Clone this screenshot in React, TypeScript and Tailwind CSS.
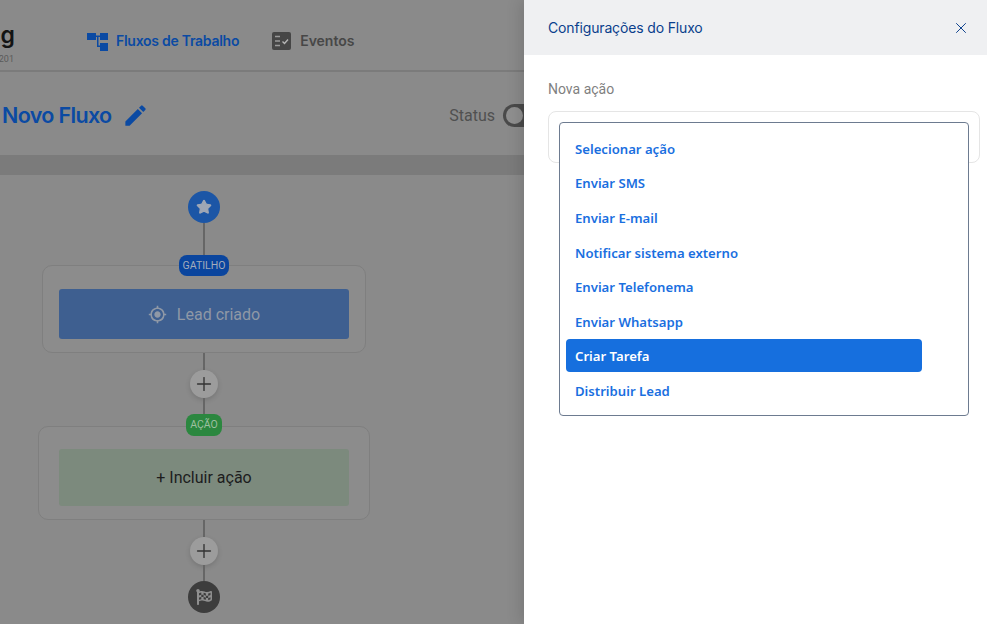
import React from 'react';
import { Star, X, Plus } from 'lucide-react';
import { MdEdit, MdGpsFixed } from 'react-icons/md';
import { FaFlagCheckered } from 'react-icons/fa';

const acoes = [
  'Selecionar ação',
  'Enviar SMS',
  'Enviar E-mail',
  'Notificar sistema externo',
  'Enviar Telefonema',
  'Enviar Whatsapp',
  'Criar Tarefa',
  'Distribuir Lead',
];

const WorkflowIcon = () => (
  <svg width="21" height="19" viewBox="0 0 21 19" fill="#0b4aa3">
    <rect x="0" y="1" width="9" height="7" />
    <rect x="13" y="1" width="8" height="7" />
    <rect x="13" y="11" width="8" height="8" />
    <rect x="9" y="3.5" width="4" height="1.5" />
    <rect x="10" y="4" width="1.5" height="11" />
    <rect x="10" y="13.5" width="3" height="1.5" />
  </svg>
);

const EventosIcon = () => (
  <svg width="19" height="18" viewBox="0 0 19 18">
    <rect width="19" height="18" rx="2" fill="#464646" />
    <path d="M3 4.5h5M3 9h5M3 13.5h5" stroke="#9a9a9a" strokeWidth="1.4" />
    <path d="M10.5 9.5l2 2 3.5-4" stroke="#b5b5b5" strokeWidth="1.4" fill="none" />
  </svg>
);

const Connector = ({ h }: { h: number }) => (
  <div className="w-[2px] bg-[#666666]" style={{ height: h }} />
);

const AddButton = () => (
  <div className="w-7 h-7 rounded-full bg-[#9c9c9c] shadow-[0_2px_5px_rgba(0,0,0,0.15)] flex items-center justify-center text-[#333333]">
    <Plus className="w-[22px] h-[22px]" strokeWidth={1.5} />
  </div>
);

const App: React.FC = () => {
  return (
    <div className="relative h-screen w-full overflow-hidden bg-[#8a8a8a] font-['Roboto',sans-serif]">
      {/* pagina atras do drawer */}
      <div className="w-[524px] h-full">
        <header className="h-[72px] border-b-2 border-[#7b7b7b] flex items-start">
          <div className="w-[87px] shrink-0 relative overflow-hidden h-full">
            <span className="absolute right-[72px] top-[24px] text-[23px] leading-none font-semibold text-[#141414] font-['Inter',sans-serif]">ng</span>
            <span className="absolute right-[73px] top-[55px] text-[9px] leading-none text-[#5a5a5a]">201</span>
          </div>
          <nav className="flex items-center gap-[33px] pt-[31px] font-['Inter',sans-serif] text-[14px] font-semibold leading-5 tracking-[-0.27px]">
            <a className="flex items-center gap-2 text-[#0b4aa3]">
              <WorkflowIcon />
              Fluxos de Trabalho
            </a>
            <a className="flex items-center gap-[9px] text-[#474747] tracking-[0px]">
              <EventosIcon />
              Eventos
            </a>
          </nav>
        </header>

        <div className="h-[83px] flex items-center pl-[2px] pt-[4px]">
          <h1 className="text-[21.5px] font-semibold text-[#0b4aa3] font-['Inter',sans-serif] tracking-[-0.65px]">Novo Fluxo</h1>
          <MdEdit className="ml-[10px] w-[27px] h-[27px] text-[#0b4aa3]" />
          <span className="ml-auto text-[16px] text-[#505050]">Status</span>
          <div className="ml-2 w-[40px] h-[23px] -mr-[19px] shrink-0 rounded-full bg-[#4a4a4a] flex items-center pl-[3px]">
            <div className="w-[17px] h-[17px] rounded-full bg-[#8f8f8f]" />
          </div>
        </div>

        <div className="h-5 bg-[#7b7b7b]" />

        <div className="w-[408px] pt-4 flex flex-col items-center">
          <div className="w-8 h-8 rounded-full bg-[#1c56a6] flex items-center justify-center">
            <Star className="w-4 h-4 text-[#9fa7b5] fill-[#9fa7b5]" />
          </div>
          <Connector h={32} />
          <div className="relative z-10 -mb-[11px] h-[21px] w-[50px] rounded-lg bg-[#0a459e] flex items-center justify-center text-[10.5px] text-[#a3acbb]">GATILHO</div>
          <div className="w-[324px] h-[88px] rounded-[10px] border border-[#7f7f7f] bg-[#8c8c8c] flex items-center justify-center">
            <div className="w-[290px] h-[50px] mt-[10px] pt-[1px] rounded-[3px] bg-[#3e5f90] flex items-center justify-center gap-[10px] text-[16px] text-[#8f98a6]">
              <MdGpsFixed className="w-[19px] h-[19px]" />
              Lead criado
            </div>
          </div>
          <Connector h={17} />
          <AddButton />
          <Connector h={16} />
          <div className="relative z-10 -mb-[10px] h-[22px] w-9 rounded-lg bg-[#2b873f] flex items-center justify-center text-[10.5px] text-[#9dbf9f]">AÇÃO</div>
          <div className="w-[332px] h-[94px] rounded-[10px] border border-[#7f7f7f] bg-[#8c8c8c] flex items-center justify-center">
            <div className="w-[290px] h-[57px] mt-[9px] rounded-[3px] bg-[#7c8a7d] flex items-center justify-center text-[16px] text-[#1d1d1d]">
              + Incluir ação
            </div>
          </div>
          <Connector h={17} />
          <AddButton />
          <Connector h={16} />
          <div className="w-8 h-8 rounded-full bg-[#3d3d3d] flex items-center justify-center">
            <FaFlagCheckered className="w-4 h-4 text-[#8f8f8f]" />
          </div>
        </div>
      </div>

      {/* drawer */}
      <aside className="absolute right-0 top-0 bottom-0 w-[463px] bg-white shadow-[-4px_0_14px_rgba(0,0,0,0.12)]">
        <div className="h-[55px] bg-[#eff0f2] flex items-center justify-between pl-6 pr-[17px]">
          <h2 className="text-[14px] text-[#0a3f8c] font-['Inter',sans-serif] tracking-[-0.15px]">Configurações do Fluxo</h2>
          <X className="w-[18px] h-[18px] text-[#0a3f8c]" strokeWidth={1.3} />
        </div>
        <div className="pl-6 pr-[7px] pt-[25px]">
          <label className="block text-[14px] leading-[18px] text-[#7f7f7f]">Nova ação</label>
          <div className="relative mt-[13px] h-[52px] rounded-lg border border-[#e5e5e5] bg-white">
            <ul className="absolute left-[10px] top-[10px] w-[410px] h-[294px] rounded-[4px] border border-[#6d7b90] bg-white pl-[6px] pr-[46px] pt-[8.7px] font-['Noto_Sans',sans-serif] text-[13.15px] font-semibold text-[#1a6fdf]">
              {acoes.map((acao) => (
                <li
                  key={acao}
                  className={`h-[33px] mb-[1.6px] pl-[9px] pt-[3px] flex items-center rounded-[4px] ${
                    acao === 'Criar Tarefa' ? 'bg-[#166fde] text-white' : ''
                  }`}
                >
                  {acao}
                </li>
              ))}
            </ul>
          </div>
        </div>
      </aside>
    </div>
  );
};

export default App;
